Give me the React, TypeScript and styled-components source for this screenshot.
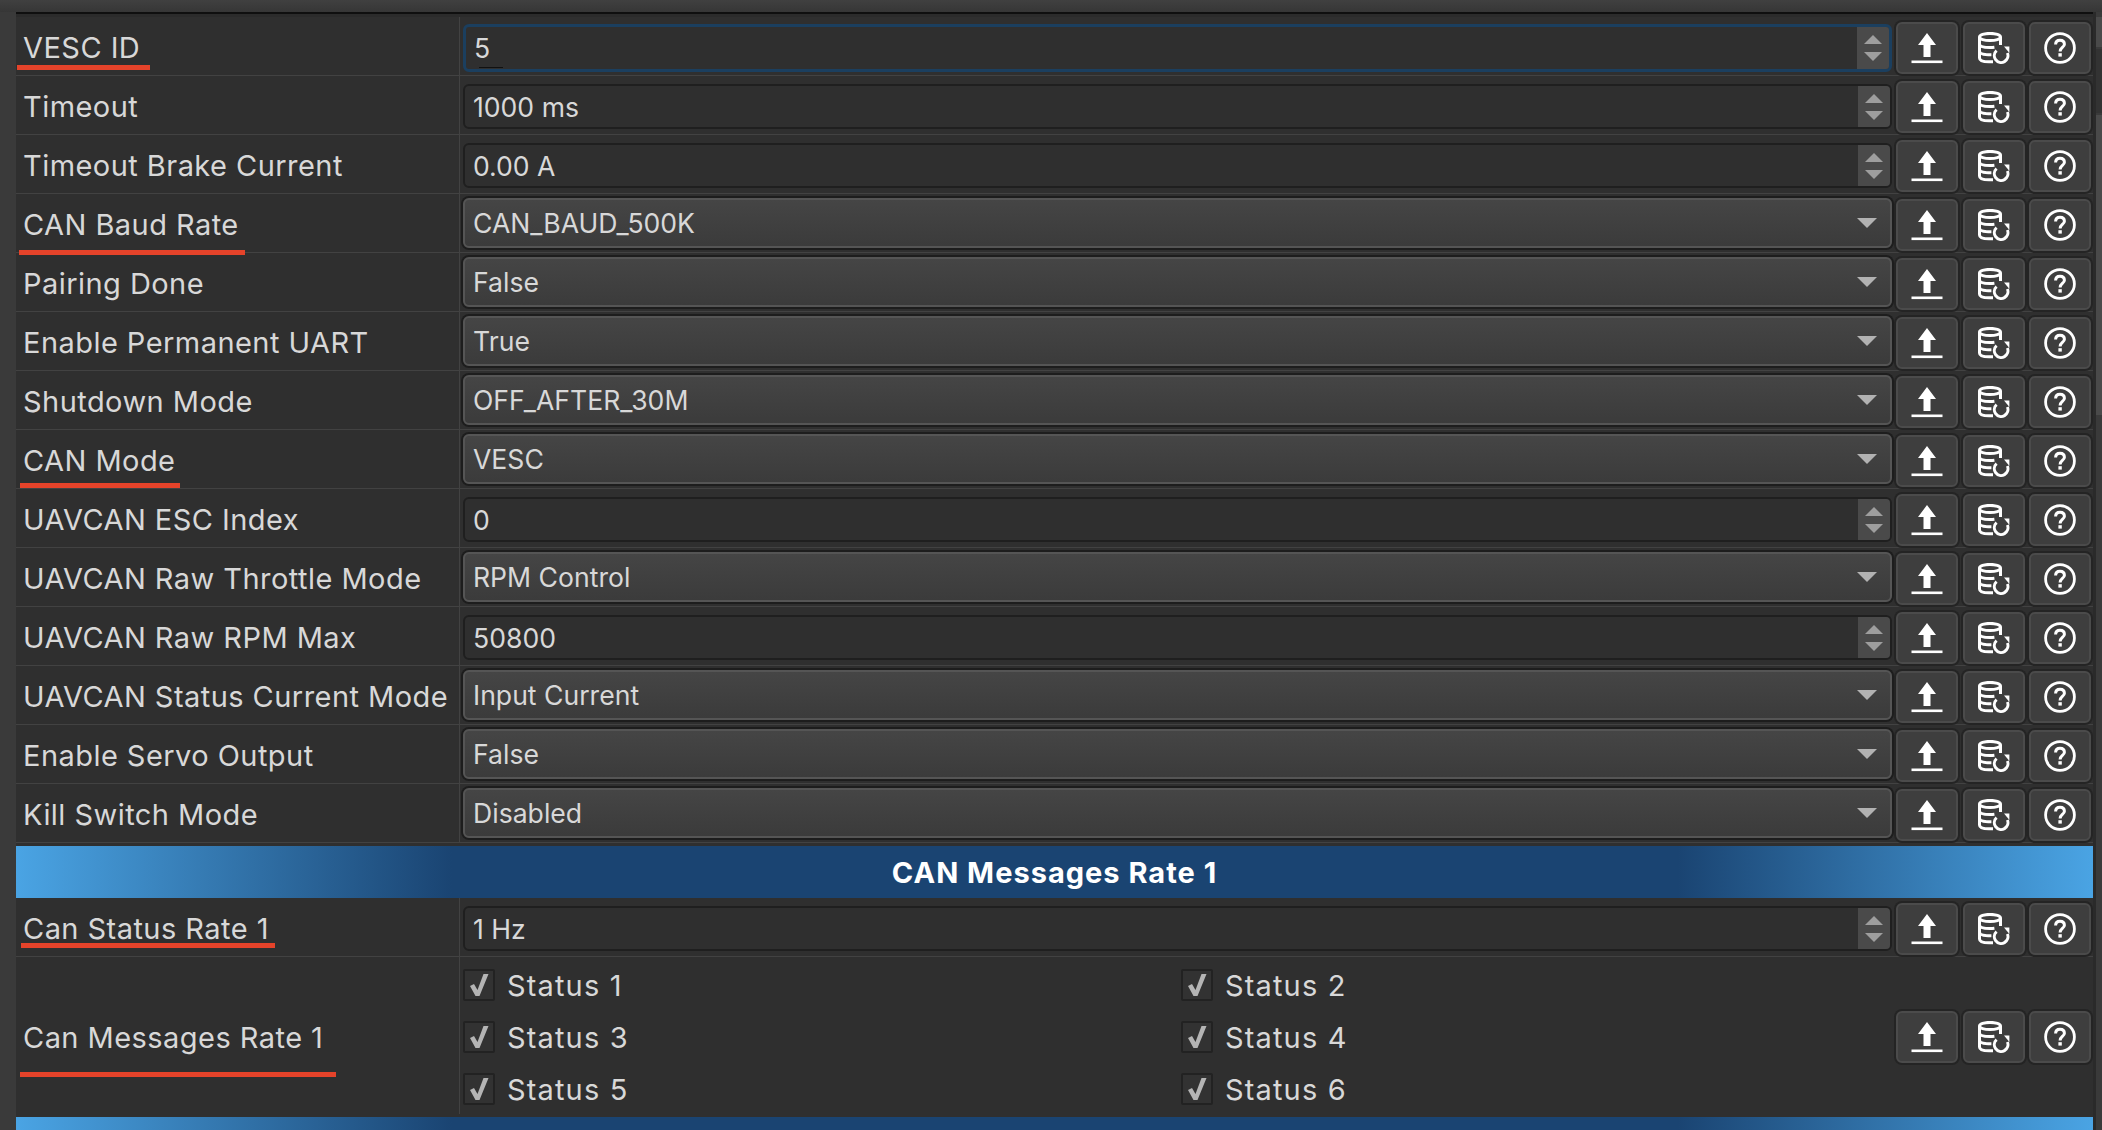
import styled, { createGlobalStyle } from 'styled-components';

const GlobalStyle = createGlobalStyle`
  html, body {
    margin: 0;
    padding: 0;
    background: #3a3a3a;
  }
`;

type Mark = { left: number; width: number; top: number };
type Param = { label: string; kind: 'spin' | 'combo'; value: string; focused?: boolean; mark?: Mark };

const generalParams: Param[] = [
  { label: 'VESC ID', kind: 'spin', value: '5', focused: true, mark: { left: 1, width: 133, top: 48 } },
  { label: 'Timeout', kind: 'spin', value: '1000 ms' },
  { label: 'Timeout Brake Current', kind: 'spin', value: '0.00 A' },
  { label: 'CAN Baud Rate', kind: 'combo', value: 'CAN_BAUD_500K', mark: { left: 3, width: 226, top: 56 } },
  { label: 'Pairing Done', kind: 'combo', value: 'False' },
  { label: 'Enable Permanent UART', kind: 'combo', value: 'True' },
  { label: 'Shutdown Mode', kind: 'combo', value: 'OFF_AFTER_30M' },
  { label: 'CAN Mode', kind: 'combo', value: 'VESC', mark: { left: 4, width: 160, top: 53 } },
  { label: 'UAVCAN ESC Index', kind: 'spin', value: '0' },
  { label: 'UAVCAN Raw Throttle Mode', kind: 'combo', value: 'RPM Control' },
  { label: 'UAVCAN Raw RPM Max', kind: 'spin', value: '50800' },
  { label: 'UAVCAN Status Current Mode', kind: 'combo', value: 'Input Current' },
  { label: 'Enable Servo Output', kind: 'combo', value: 'False' },
  { label: 'Kill Switch Mode', kind: 'combo', value: 'Disabled' },
];

const statuses = ['Status 1', 'Status 2', 'Status 3', 'Status 4', 'Status 5', 'Status 6'];

function UploadIcon() {
  return (
    <svg width="32" height="32" viewBox="0 0 32 32" fill="#fff">
      <path d="M16 1 L25 13 L19.5 13 L19.5 25 L12.5 25 L12.5 13 L7 13 Z" />
      <rect x="0.5" y="28.5" width="31" height="2.6" />
    </svg>
  );
}

function RestoreIcon() {
  return (
    <svg width="32" height="32" viewBox="0 0 32 32" fill="none" stroke="#fff" strokeWidth="3">
      <ellipse cx="12" cy="5" rx="10.5" ry="3.6" />
      <path d="M1.5 5 V26 C1.5 28.6 5 29.8 11 29.8 H15" />
      <path d="M22.5 5 V13" />
      <path d="M1.5 12 C1.5 14.6 6 15.6 12 15.6 C13.6 15.6 15 15.5 16.4 15.3" />
      <path d="M1.5 19.2 C1.5 21.8 6 22.8 13.4 22.8" />
      <path d="M18.6 18.6 A6.8 6.8 0 1 0 29.4 21" />
      <path d="M26 14.6 L31.4 14.6 L31.4 21 Z" fill="#fff" stroke="none" />
    </svg>
  );
}

function HelpIcon() {
  return (
    <svg width="32" height="32" viewBox="0 0 32 32" fill="none" stroke="#fff">
      <circle cx="16" cy="16" r="14.4" strokeWidth="2.8" />
      <path d="M11.6 12.6 C11.6 9.8 13.4 8.2 16 8.2 C18.7 8.2 20.4 9.8 20.4 12.2 C20.4 15.4 16.1 15.6 16.1 19.4" strokeWidth="3" />
      <rect x="14.4" y="21.2" width="3.4" height="3.4" fill="#fff" stroke="none" />
    </svg>
  );
}

function RowActions() {
  return (
    <Actions>
      <ActionButton><UploadIcon /></ActionButton>
      <ActionButton><RestoreIcon /></ActionButton>
      <ActionButton><HelpIcon /></ActionButton>
    </Actions>
  );
}

function ParamRow({ param }: { param: Param }) {
  return (
    <Row>
      <LabelCell>
        {param.label}
        {param.mark && <RedMark $left={param.mark.left} $width={param.mark.width} $top={param.mark.top} />}
      </LabelCell>
      {param.kind === 'spin' ? (
        <SpinBox $focused={param.focused}>
          <FieldText>{param.value}</FieldText>
          <SpinSteps>
            <ArrowUp />
            <ArrowDown />
          </SpinSteps>
        </SpinBox>
      ) : (
        <ComboBox>
          <FieldText>{param.value}</FieldText>
          <ComboArrow />
        </ComboBox>
      )}
      <RowActions />
    </Row>
  );
}

function App() {
  return (
    <Page>
      <GlobalStyle />
      <TopStrip />
      <Body>
        <Table>
          <TableTop />
          {generalParams.map((p) => (
            <ParamRow key={p.label} param={p} />
          ))}
          <Band>CAN Messages Rate 1</Band>
          <ParamRow
            param={{
              label: 'Can Status Rate 1',
              kind: 'spin',
              value: '1 Hz',
              mark: { left: 5, width: 254, top: 45 },
            }}
          />
          <TallRow>
            <LabelCell>
              Can Messages Rate 1
              <RedMark $left={4} $width={316} $top={115} />
            </LabelCell>
            <CheckGrid>
              {statuses.map((s) => (
                <CheckItem key={s}>
                  <CheckBox>
                    <svg width="20" height="24" viewBox="0 0 20 24" fill="#b4b4b4">
                      <path d="M1 13 L5 11 L8.5 17 L14.5 1 L19.5 1 L10.5 23 L6.5 23 Z" />
                    </svg>
                  </CheckBox>
                  {s}
                </CheckItem>
              ))}
            </CheckGrid>
            <RowActions />
          </TallRow>
          <Band />
        </Table>
        <ScrollTrack>
          <ScrollPiece $height={30} />
          <ScrollGap $height={64} />
          <ScrollPiece $height={300} />
        </ScrollTrack>
      </Body>
    </Page>
  );
}

const Page = styled.div`
  width: 2102px;
  height: 1130px;
  overflow: hidden;
  display: flex;
  flex-direction: column;
  background: #3a3a3a;
  color: #d8d8d8;
  font-family: Inter, "Liberation Sans", sans-serif;
  font-size: 29px;
  letter-spacing: 0.45px;
`;

const TopStrip = styled.div`
  height: 12px;
  flex: none;
  background: linear-gradient(#404040, #363636);
`;

const Body = styled.div`
  flex: 1;
  display: flex;
  padding-left: 16px;
  min-height: 0;
`;

const Table = styled.div`
  width: 2077px;
  flex: none;
  display: flex;
  flex-direction: column;
  background: #2f2f2f;
`;

const TableTop = styled.div`
  height: 5px;
  flex: none;
  box-sizing: border-box;
  border-top: 2px solid #0f0f0f;
  background: #2b2b2b;
`;

const Row = styled.div`
  position: relative;
  height: 59px;
  flex: none;
  box-sizing: border-box;
  display: flex;
  align-items: center;
  padding-top: 3px;
  border-bottom: 1px solid #424242;
`;

const TallRow = styled(Row)`
  height: 157px;
  border-bottom: none;
`;

const LabelCell = styled.div`
  position: relative;
  width: 444px;
  flex: none;
  align-self: stretch;
  margin-top: -3px;
  padding-top: 3px;
  display: flex;
  align-items: center;
  box-sizing: border-box;
  padding-left: 7px;
  border-right: 1px solid #424242;
  white-space: nowrap;
`;

const RedMark = styled.span<{ $left: number; $width: number; $top: number }>`
  position: absolute;
  left: ${(p) => p.$left}px;
  top: ${(p) => p.$top}px;
  width: ${(p) => p.$width}px;
  height: 5px;
  background: #e5432a;
`;

const FieldText = styled.span`
  flex: 1;
  padding-left: 8px;
  font-size: 26.6px;
  letter-spacing: 0;
  white-space: nowrap;
`;

const SpinBox = styled.div<{ $focused?: boolean }>`
  position: relative;
  margin-left: 3px;
  width: 1429px;
  height: ${(p) => (p.$focused ? 48 : 45)}px;
  flex: none;
  box-sizing: border-box;
  display: flex;
  align-items: center;
  background: #2f2f2f;
  border: ${(p) => (p.$focused ? '3px solid #1b3f5f' : '2px solid #1f1f1f')};
  border-radius: 6px;
  overflow: hidden;

  ${(p) =>
    p.$focused &&
    `&::after {
      content: '';
      position: absolute;
      left: 13px;
      bottom: 1px;
      width: 24px;
      height: 1px;
      background: #111;
    }`}
`;

const SpinSteps = styled.div`
  width: 32px;
  align-self: stretch;
  flex: none;
  display: flex;
  flex-direction: column;
  align-items: center;
  justify-content: center;
  gap: 8px;
  background: #4a4a4a;
`;

const ArrowUp = styled.span`
  width: 0;
  height: 0;
  border-left: 9px solid transparent;
  border-right: 9px solid transparent;
  border-bottom: 9px solid #9e9e9e;
`;

const ArrowDown = styled.span`
  width: 0;
  height: 0;
  border-left: 9px solid transparent;
  border-right: 9px solid transparent;
  border-top: 9px solid #9e9e9e;
`;

const ComboBox = styled.div`
  margin-left: 3px;
  margin-bottom: 3px;
  width: 1429px;
  height: 50px;
  flex: none;
  box-sizing: border-box;
  display: flex;
  align-items: center;
  background: linear-gradient(#454545, #3b3b3b);
  border: 2px solid #555;
  border-radius: 6px;
  box-shadow: 0 0 0 2px #1d1d1d;
`;

const ComboArrow = styled.span`
  width: 0;
  height: 0;
  margin-right: 13px;
  border-left: 10px solid transparent;
  border-right: 10px solid transparent;
  border-top: 10px solid #b2b2b2;
`;

const Actions = styled.div`
  display: flex;
  gap: 4.5px;
  margin-left: 4px;
  flex: none;
`;

const ActionButton = styled.div`
  width: 62px;
  height: 52px;
  box-sizing: border-box;
  display: flex;
  align-items: center;
  justify-content: center;
  background: #3e3e3e;
  border: 2px solid #4b4b4b;
  border-radius: 6px;
  box-shadow: 0 0 0 2px #242424;
`;

const CheckGrid = styled.div`
  width: 1429px;
  flex: none;
  margin-left: 3px;
  display: grid;
  grid-template-columns: 718px 711px;
  row-gap: 20px;
`;

const CheckItem = styled.div`
  display: flex;
  align-items: center;
  gap: 12px;
  height: 32px;
  white-space: nowrap;
  letter-spacing: 1.15px;
`;

const CheckBox = styled.span`
  width: 32px;
  height: 32px;
  box-sizing: border-box;
  display: flex;
  align-items: center;
  justify-content: center;
  flex: none;
  background: #323232;
  border: 2px solid #222;
  border-radius: 2px;
`;

const Band = styled.div`
  height: 52px;
  margin-top: 3px;
  flex: none;
  display: flex;
  align-items: center;
  justify-content: center;
  color: #fff;
  font-size: 29px;
  font-weight: 700;
  letter-spacing: 1px;
  background: linear-gradient(90deg, #4aa4e4 0%, #1a4472 21%, #1a4472 80%, #4aa4e4 100%);
`;

const ScrollTrack = styled.div`
  flex: 1;
  display: flex;
  flex-direction: column;
  padding-top: 5px;
  gap: 2px;
  border-left: 3px solid #2a2a2a;
`;

const ScrollPiece = styled.div<{ $height: number }>`
  height: ${(p) => p.$height}px;
  background: #4a4a4a;
  flex: none;
`;

const ScrollGap = styled.div<{ $height: number }>`
  height: ${(p) => p.$height}px;
  background: #333;
  flex: none;
`;

export default App;
